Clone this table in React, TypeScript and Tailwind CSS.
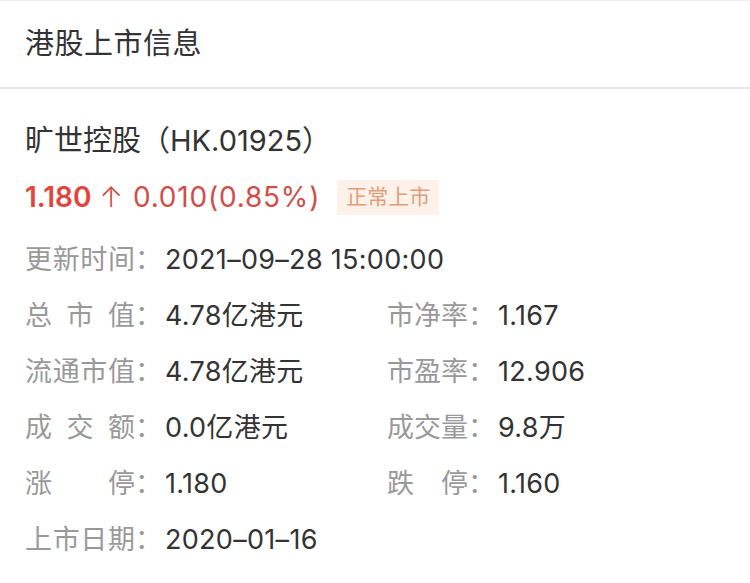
import React from 'react';

const FONT = { fontFamily: 'Inter, "Noto Sans CJK SC", sans-serif' };

// label characters spread across a fixed width, then a full-width colon
function Label({ chars, width }: { chars: string[]; width: string }) {
    return (
        <span className="flex shrink-0 text-[#999999]">
            <span className={`flex justify-between ${width}`}>
                {chars.map((c, i) => (
                    <span key={i}>{c}</span>
                ))}
            </span>
            <span className="w-[30px]">：</span>
        </span>
    );
}

function Field({ chars, value, width }: { chars: string[]; value: string; width: string }) {
    return (
        <div className="flex h-[56px] items-center">
            <Label chars={chars} width={width} />
            <span className="text-[#333333] tracking-[0.3px]">{value}</span>
        </div>
    );
}

export default function App() {
    return (
        <div className="w-[750px] h-[583px] bg-white border-t border-[#eeeeee]" style={FONT}>
            {/* Header */}
            <div className="h-[88px] flex items-center px-[25px] border-b-2 border-[#e6e6e6]">
                <h2 className="text-[29px] text-[#333333] tracking-[0.5px]">港股上市信息</h2>
            </div>

            <div className="px-[25px] pt-[31px]">
                {/* Stock name */}
                <div className="h-[42px] flex items-center text-[29px] text-[#333333]">
                    旷世控股（HK.01925）
                </div>

                {/* Price line */}
                <div className="h-[42px] mt-[14px] flex items-center gap-[17px]">
                    <div className="flex items-center text-[28px]">
                        <span className="font-semibold text-[#e2453c]">1.180</span>
                        <span className="ml-[8px] text-[#cf4f48] font-light">↑</span>
                        <span className="ml-[10px] text-[#cf4f48] tracking-[0.8px]">0.010(0.85%)</span>
                    </div>
                    <span className="h-[35px] px-[9px] flex items-center bg-[#fdf1ea] text-[#dc9f79] text-[21px]">
                        正常上市
                    </span>
                </div>

                {/* Detail rows */}
                <div className="mt-[14px] text-[27px]">
                    <Field chars={['更', '新', '时', '间']} value="2021–09–28 15:00:00" width="w-[110px]" />
                    <div className="grid grid-cols-[362px_1fr]">
                        <Field chars={['总', '市', '值']} value="4.78亿港元" width="w-[110px]" />
                        <Field chars={['市', '净', '率']} value="1.167" width="w-[81px]" />
                        <Field chars={['流', '通', '市', '值']} value="4.78亿港元" width="w-[110px]" />
                        <Field chars={['市', '盈', '率']} value="12.906" width="w-[81px]" />
                        <Field chars={['成', '交', '额']} value="0.0亿港元" width="w-[110px]" />
                        <Field chars={['成', '交', '量']} value="9.8万" width="w-[81px]" />
                        <Field chars={['涨', '停']} value="1.180" width="w-[110px]" />
                        <Field chars={['跌', '停']} value="1.160" width="w-[81px]" />
                    </div>
                    <Field chars={['上', '市', '日', '期']} value="2020–01–16" width="w-[110px]" />
                </div>
            </div>
        </div>
    );
}
